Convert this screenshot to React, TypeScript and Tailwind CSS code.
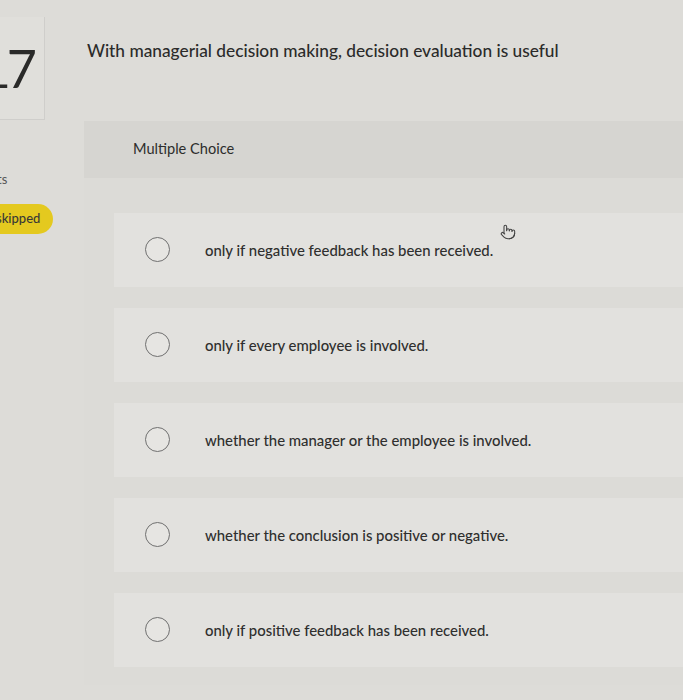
import { Pointer } from 'lucide-react';

const options = [
  'only if negative feedback has been received.',
  'only if every employee is involved.',
  'whether the manager or the employee is involved.',
  'whether the conclusion is positive or negative.',
  'only if positive feedback has been received.',
];

function Option ({ text, cursor }: { text: string, cursor?: boolean }) {
  return (
    <li className="relative flex items-center h-[74px] bg-[#e2e1de] pl-[31px]">
      <span className="w-[25px] h-[25px] shrink-0 rounded-full border-[1.5px] border-[#707070] bg-[#e6e5e2]" />
      <span className="ml-[35px] text-[14.9px] font-medium text-[#2f2f2e]">{text}</span>
      {cursor && (
        <Pointer className="absolute left-[386px] top-[11px] text-[#444]" size={16} strokeWidth={1.6} />
      )}
    </li>
  );
}

export default function App () {
  return (
    <div className="w-[683px] h-[700px] overflow-hidden bg-[#dddcd8] flex font-['Lato',sans-serif] text-[#2d2d2c]">
      <aside className="w-[45px] shrink-0 flex flex-col">
        <div className="mt-[17px] h-[103px] border-r border-b border-[#cfcecb] bg-[#e0dfdb] flex items-center justify-end pr-[11px] overflow-hidden">
          <span className="text-[52px] font-normal leading-none tracking-[-4px] text-[#2a2a29]">17</span>
        </div>
        <div className="mt-[50px] text-[13px] text-[#555] -ml-[3px]">ts</div>
        <div className="mt-[14px] -ml-[14px] w-[67px] h-[30px] rounded-r-full bg-[#e4c91f] flex items-center pl-[10px] text-[13px] font-medium text-[#3a3a36]">
          skipped
        </div>
      </aside>
      <main className="flex-1 flex flex-col pl-[42px]">
        <h1 className="mt-[38px] text-[17.3px] font-medium text-[#2b2b2a]">With managerial decision making, decision evaluation is useful</h1>
        <section className="mt-[57px] -ml-[3px] bg-[#dcdbd7] flex-1 mb-[15px]">
          <div className="h-[57px] bg-[#d6d5d1] flex items-center pl-[49px] text-[14.6px] text-[#2d2d2c]">Multiple Choice</div>
          <ul className="flex flex-col gap-[21px] pt-[35px] pl-[30px]">
            {options.map((o, i) => (
              <Option key={o} text={o} cursor={i === 0} />
            ))}
          </ul>
        </section>
      </main>
    </div>
  );
}
